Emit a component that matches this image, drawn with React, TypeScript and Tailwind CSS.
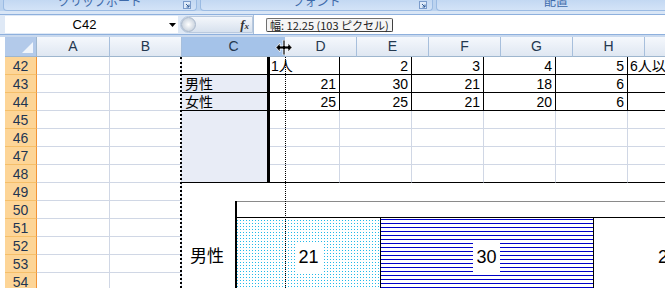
import React from "react";

const data: Record<number, { c: string; v: string[]; i: string }> = {
  42: { c: "", v: ["1人", "2", "3", "4", "5"], i: "6人以上" },
  43: { c: "男性", v: ["21", "30", "21", "18", "6"], i: "" },
  44: { c: "女性", v: ["25", "25", "21", "20", "6"], i: "" },
};

const rowNums = [42, 43, 44, 45, 46, 47, 48, 49, 50, 51, 52, 53, 54];
const valWidths = ["w-[70px]", "w-[72px]", "w-[72px]", "w-[72px]", "w-[72px]"];

function SheetRow({ n }: { n: number }) {
  const d = data[n];
  const inTable = n <= 44;
  const sel = n >= 43 && n <= 48;
  return (
    <div className="flex h-[18px] shrink-0 text-[14px] leading-[16px] text-black">
      <div className="w-[5px] shrink-0 bg-white" />
      <div className="w-[32px] shrink-0 bg-[#fdd597] border-r border-b border-r-[#f29436] border-b-[#f5bf6a] text-center font-['Liberation_Sans'] text-[14px] leading-[18px] text-[#1f3552]">
        {n}
      </div>
      <div className="w-[73px] shrink-0 border-r border-b border-[#d0d7e5]" />
      <div className="w-[72px] shrink-0 border-r border-b border-[#d0d7e5]" />
      <div
        className={`w-[88px] shrink-0 border-r-[3px] border-r-black pl-[3px] pt-[1px] whitespace-nowrap ${
          sel ? "bg-[#e8ecf6]" : "bg-white"
        } ${inTable || n === 48 ? "border-b border-b-black" : ""}`}
      >
        {d?.c}
      </div>
      {valWidths.map((w, k) => {
        const txt = d?.v[k] ?? "";
        let cls = "border-r border-b border-[#d0d7e5]";
        if (inTable) cls = "border-r border-b border-black";
        if (n === 48) cls = "border-r border-r-[#d0d7e5] border-b border-b-black";
        const align = n === 42 && k === 0 ? "text-left pl-[1px]" : "text-right pr-[3px]";
        return (
          <div key={k} className={`${w} shrink-0 ${cls} ${align} pt-[1px] whitespace-nowrap`}>
            {txt}
          </div>
        );
      })}
      <div
        className={`w-[72px] shrink-0 pl-[2px] pt-[1px] whitespace-nowrap ${
          inTable || n === 48 ? "border-b border-b-black" : "border-b border-[#d0d7e5]"
        }`}
      >
        {d?.i}
      </div>
    </div>
  );
}

const headers = [
  { l: "A", w: "w-[73px]" },
  { l: "B", w: "w-[72px]" },
  { l: "C", w: "w-[103px]", on: true },
  { l: "D", w: "w-[72px]" },
  { l: "E", w: "w-[72px]" },
  { l: "F", w: "w-[72px]" },
  { l: "G", w: "w-[72px]" },
  { l: "H", w: "w-[72px]" },
  { l: "", w: "w-[72px]" },
];

function Group({ w, label, launcher }: { w: string; label: string; launcher?: boolean }) {
  return (
    <div
      className={`${w} h-[11px] shrink-0 flex justify-center items-start overflow-hidden rounded-b-[4px] border border-t-0 border-[#9bbbe3] bg-linear-to-b from-[#c3d8f2] to-[#d3e3f7] relative`}
    >
      <span className="-mt-[6px] text-[12px] leading-[14px] text-[#3e6aaa] font-['Noto_Sans_CJK_JP',sans-serif]">
        {label}
      </span>
      {launcher && (
        <svg className="absolute right-[5px] top-[1px]" width="8" height="8" viewBox="0 0 8 8">
          <rect x="0.5" y="0.5" width="7" height="7" fill="#dfeaf8" stroke="#7c9ccb" />
          <path d="M3 3 L6 6 M6 3.5 V6 H3.5" stroke="#2f5b97" fill="none" />
        </svg>
      )}
    </div>
  );
}

function Chart() {
  return (
    <div className="absolute left-[182px] top-[183px] w-[483px] h-[105px] bg-white">
      <svg width="483" height="105" viewBox="0 0 483 105">
        <defs>
          <pattern id="dots" width="3" height="3" patternUnits="userSpaceOnUse">
            <rect x="1" y="1" width="1" height="1" fill="#22b8e8" />
          </pattern>
          <pattern id="hlines" width="4" height="4" patternUnits="userSpaceOnUse">
            <rect x="0" y="0" width="4" height="1" fill="#0000c8" />
          </pattern>
        </defs>
        <rect x="53" y="18" width="430" height="1" fill="#8a8a8a" />
        <rect x="53" y="18" width="2" height="87" fill="#000" />
        <rect x="55" y="34" width="428" height="1" fill="#000" />
        <rect x="55" y="35" width="143" height="70" fill="url(#dots)" />
        <rect x="198" y="35" width="1" height="70" fill="#000" />
        <rect x="199" y="35" width="212" height="70" fill="url(#hlines)" />
        <rect x="411" y="35" width="1" height="70" fill="#000" />
        <text x="8" y="79" fontSize="17" fontFamily="'Noto Sans CJK JP', sans-serif" fill="#000">
          男性
        </text>
        <rect x="113" y="60" width="27" height="29" fill="#fff" />
        <text x="126.5" y="80" fontSize="18" textAnchor="middle" fontFamily="'Liberation Sans', sans-serif">
          21
        </text>
        <rect x="291" y="60" width="27" height="29" fill="#fff" />
        <text x="304.5" y="80" fontSize="18" textAnchor="middle" fontFamily="'Liberation Sans', sans-serif">
          30
        </text>
        <text x="476" y="80" fontSize="18" fontFamily="'Liberation Sans', sans-serif">
          21
        </text>
      </svg>
    </div>
  );
}

export default function App() {
  return (
    <div className="w-[665px] h-[288px] overflow-hidden relative bg-white font-['Liberation_Sans','Noto_Sans_CJK_JP',sans-serif]">
      {/* ribbon group labels */}
      <div className="h-[11px] flex gap-[3px] bg-[#bcd3ef] pl-[3px]">
        <Group w="w-[194px]" label="クリップボード" launcher />
        <Group w="w-[233px]" label="フォント" launcher />
        <Group w="w-[240px]" label="配置" />
      </div>
      <div className="h-[4px] bg-[#d9e6f6] border-b border-[#8eb0dd]" />

      {/* formula bar */}
      <div className="h-[19px] flex items-center bg-[#dfe9f6] pl-[5px]">
        <div className="w-[173px] shrink-0 h-[17px] bg-white flex items-center relative">
          <span className="flex-1 text-center text-[13px] leading-[17px] pr-[14px] text-black">C42</span>
          <svg className="absolute right-[2px] top-[7px]" width="7" height="4" viewBox="0 0 7 4">
            <path d="M0 0 H7 L3.5 4 Z" fill="#000" />
          </svg>
        </div>
        <div className="ml-[2px] w-[73px] shrink-0 h-[17px] rounded-l-[9px] bg-linear-to-b from-[#f4f7fb] to-[#d7e1ee] border border-[#b9c9de] flex items-center relative">
          <div className="w-[15px] h-[15px] rounded-full bg-radial from-[#ffffff] to-[#b8c4d3] border border-[#a9b8cc]" />
          <span className="ml-auto mr-[3px] font-['Liberation_Serif'] italic font-bold text-[13px] leading-none text-[#333]">
            f<span className="text-[9px]">x</span>
          </span>
        </div>
        <div className="flex-1 h-[19px] bg-white border-l border-[#a8bed8] flex items-center pl-[12px]">
          <div className="h-[14px] px-[3px] bg-[#f5f5f5] border border-[#707070] border-r-[#404040] border-b-[#404040] rounded-[2px] text-[11px] leading-[12px] text-[#222] whitespace-nowrap font-['Noto_Sans_CJK_JP',sans-serif]">
            幅: 12.25 (103 ピクセル)
          </div>
        </div>
      </div>
      <div className="h-[3px] bg-[#c9d9ee] border-t border-[#8eb0dd]" />

      {/* column headers */}
      <div className="h-[20px] flex">
        <div className="w-[5px] shrink-0 bg-white" />
        <div className="w-[32px] shrink-0 bg-[#b3caea] border-r border-b border-[#9eb6ce] flex items-end justify-end pr-[3px] pb-[3px]">
          <svg width="11" height="11" viewBox="0 0 11 11">
            <path d="M11 0 V11 H0 Z" fill="#f0f5fc" />
          </svg>
        </div>
        {headers.map((h) => (
          <div
            key={h.l + h.w}
            className={`${h.w} shrink-0 text-center text-[14px] leading-[19px] text-[#24384f] border-b border-b-[#9eb6ce] ${
              h.on
                ? "bg-[#a5c3e9]"
                : "bg-linear-to-b from-[#f5f8fc] to-[#dfe7f2] border-r border-r-[#a7bfdc]"
            }`}
          >
            {h.l}
          </div>
        ))}
      </div>

      {/* sheet rows */}
      <div className="flex flex-col">
        {rowNums.map((n) => (
          <SheetRow key={n} n={n} />
        ))}
      </div>

      <Chart />

      {/* selection marquee + column drag guide */}
      <div className="absolute left-[180px] top-[57px] h-[231px] border-l-2 border-dotted border-black" />
      <div className="absolute left-[285px] top-[57px] h-[231px] border-l border-dotted border-black" />

      {/* resize cursor */}
      <svg className="absolute left-[275px] top-[40px]" width="18" height="15" viewBox="0 0 18 15">
        <path
          d="M8 0 H10 V6 H13 V3 L17 7.5 L13 12 V9 H10 V15 H8 V9 H5 V12 L1 7.5 L5 3 V6 H8 Z"
          fill="#000"
          stroke="#fff"
          strokeWidth="0.8"
        />
      </svg>
    </div>
  );
}
